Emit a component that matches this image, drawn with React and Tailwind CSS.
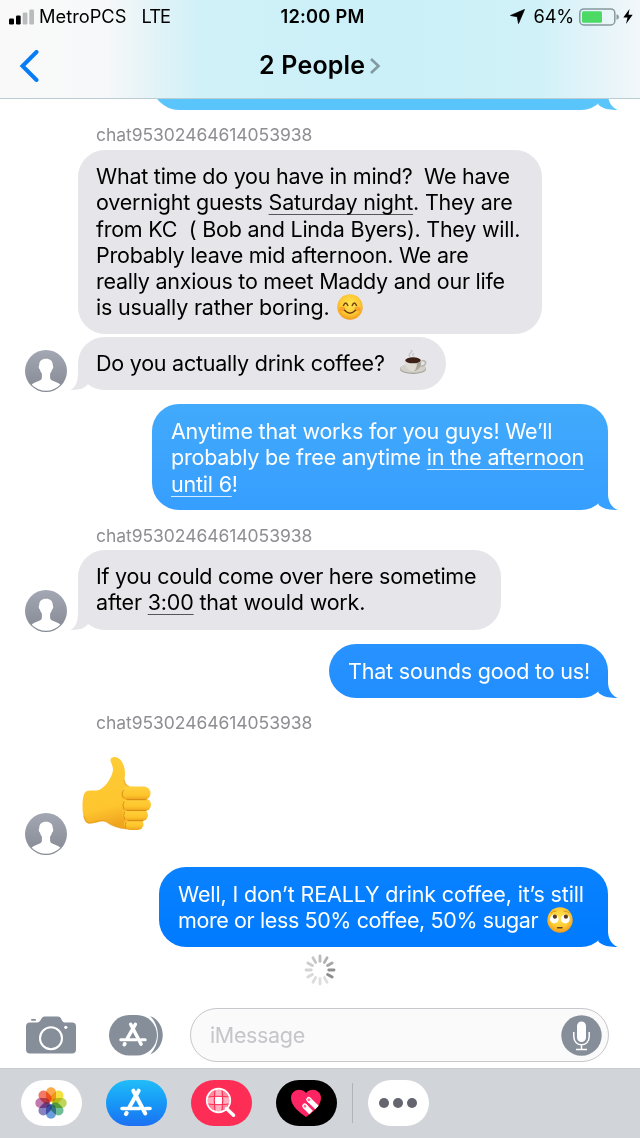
import React from "react";

const Avatar = () => (
  <svg className="block h-[42px] w-[42px]" viewBox="0 0 42 42">
    <defs>
      <linearGradient id="avatarFill" x1="0" y1="0" x2="0" y2="1">
        <stop offset="0" stopColor="#a2a7b3" />
        <stop offset="1" stopColor="#858993" />
      </linearGradient>
      <clipPath id="avatarClip"><circle cx="21" cy="21" r="19.8" /></clipPath>
    </defs>
    <circle cx="21" cy="21" r="21" fill="url(#avatarFill)" />
    <path clipPath="url(#avatarClip)" fill="#fff" d="M21 8.8c4.6 0 7 2.700 6.800 6.700.2.300.6.900.4 2-.2 1.300-.7 1.900-1.200 2.100-.3 1.900-1 3-1.900 4v4.400c.3 2.200 3 3 6.200 4.200 3.400 1.200 6 2.800 6 9.800H4.700c0-7 2.600-8.600 6-9.800 3.200-1.200 5.900-2 6.200-4.200v-4.400c-.9-1-1.600-2.100-1.900-4-.5-.2-1-.8-1.200-2.100-.2-1.100.2-1.700.4-2C14 11.500 16.400 8.800 21 8.800z" />
  </svg>
);

const TailRight = ({ className }) => (
  <svg className={"absolute -right-[10px] bottom-0 h-[30px] w-6 " + className} viewBox="0 0 24 30">
    <path fill="currentColor" d="M14 2V14C14 21 17 27 23.500 29.900C15.500 30.200 8.500 28.700 4.500 24.800L3 12Z" />
  </svg>
);

const TailLeft = () => (
  <svg className="absolute bottom-0 -left-[8px] h-[30px] w-6 text-[#e5e5ea]" viewBox="0 0 24 30">
    <path fill="currentColor" d="M8 2V14C8 21 6 27 .5 29.900C8 30.200 14 28.700 17.500 24.800L19 12Z" />
  </svg>
);

const Smile = () => (
  <svg className="ml-[8px] inline-block h-[26px] w-[26px] align-[-5px]" viewBox="0 0 26 26">
    <defs>
      <radialGradient id="smileFill" cx=".5" cy=".4" r=".6">
        <stop offset="0" stopColor="#ffe44f" /><stop offset=".65" stopColor="#fdc934" /><stop offset="1" stopColor="#f19a1c" />
      </radialGradient>
    </defs>
    <circle cx="13" cy="13" r="12.700" fill="url(#smileFill)" />
    <ellipse cx="5.500" cy="15" rx="3" ry="2.200" fill="#f58b2a" opacity=".6" />
    <ellipse cx="20.500" cy="15" rx="3" ry="2.200" fill="#f58b2a" opacity=".6" />
    <path d="M6.500 11.500Q8.700 6.500 10.800 11.500M15.200 11.500Q17.300 6.500 19.500 11.500M7.500 16.300Q13 22 18.500 16.300" fill="none" stroke="#6f4112" strokeWidth="1.500" strokeLinecap="round" />
  </svg>
);

const Coffee = () => (
  <svg className="ml-[15px] inline-block h-[26px] w-[27px] align-[-5px]" viewBox="0 0 27 26">
    <path d="M10 7Q8 5 10.500 3T11 0M14 7Q12 5 13.500 3" fill="none" stroke="#c3c3c7" strokeWidth="1.200" />
    <ellipse cx="13" cy="19" rx="13" ry="5" fill="#a5a096" />
    <ellipse cx="13" cy="18.300" rx="12.500" ry="4.500" fill="#d3d0c9" />
    <path d="M21 11c6-2 6.500 5-1 5.500" fill="none" stroke="#bbb7ae" strokeWidth="1.700" />
    <path d="M4.500 10h17c0 6-3 11-8.500 11S4.500 16 4.500 10z" fill="#dedbd3" />
    <path d="M17 12h4.300c-.5 5-3 8.500-7 9 2-2 2.700-5 2.700-9z" fill="#aaa59a" />
    <ellipse cx="13" cy="10" rx="8.500" ry="3.600" fill="#f3f1ec" />
    <ellipse cx="13" cy="10.300" rx="7.800" ry="3" fill="#3d2017" />
  </svg>
);

const RollingEyes = () => (
  <svg className="ml-[9px] inline-block h-[26px] w-[26px] align-[-5px]" viewBox="0 0 26 26">
    <circle cx="13" cy="13" r="12.700" fill="url(#smileFill)" />
    <circle cx="7.300" cy="12" r="4.400" fill="#fff" />
    <circle cx="18.300" cy="12" r="4.400" fill="#fff" />
    <circle cx="7.900" cy="9.700" r="2.100" fill="#5b3a22" />
    <circle cx="18.900" cy="9.700" r="2.100" fill="#5b3a22" />
    <path d="M10.500 20.700h4.500" stroke="#6f4112" strokeWidth="1.500" strokeLinecap="round" />
    <path d="M4 6Q6 3.500 9 4M17 4Q20 3.500 22 6" fill="none" stroke="#d68f20" strokeWidth="1" strokeLinecap="round" />
  </svg>
);

const ThumbsUp = () => (
  <svg className="block h-[76px] w-[72px]" viewBox="0 0 72 76">
    <defs>
      <linearGradient id="thumbFill" x1="0" y1="0" x2=".2" y2="1">
        <stop offset="0" stopColor="#fdce38" /><stop offset=".75" stopColor="#fec52e" /><stop offset="1" stopColor="#f0a51f" />
      </linearGradient>
      <linearGradient id="fingerFill" x1="0" y1="0" x2="0" y2="1">
        <stop offset="0" stopColor="#ffd03c" /><stop offset=".65" stopColor="#fec52c" /><stop offset="1" stopColor="#eda11c" />
      </linearGradient>
    </defs>
    <path fill="url(#thumbFill)" d="M6 35C10 34 15 35 18 34C25 31 31 21 32 14C32 9 29 6 29.500 3.500C31 -.5 38 .5 41 6C45 13 44 18 43.500 24C43.500 27 45 29.500 48 30.500L60 32L60 70L54 73.500L46 73C38 72.500 31 70 25 65.500C21 63.500 16 67 8 67.500C3 67 1.500 58 1.500 50C1.500 43 2.500 36 6 35Z" />
    <path fill="none" stroke="#e89b1c" strokeWidth="1.500" d="M3 60C4 64 6 67 8 67C14 67 20 63 25 65.500C31 70 38 72.500 46 72.700M43.300 24C43.500 27 45 29.500 48 30.500" opacity=".6" />
    <g fill="url(#fingerFill)">
      <rect x="43" y="62.500" width="19.500" height="11.500" rx="5.700" />
      <rect x="41.500" y="53.500" width="25.500" height="11.500" rx="5.700" />
      <rect x="41" y="42.500" width="29" height="12.500" rx="6.200" />
      <rect x="40" y="30.500" width="29.500" height="13.500" rx="6.700" />
    </g>
    <path d="M46 43.700H65M46 54.500H65M47 64.700H62M42.500 34Q39.500 38 42.500 42M43 45.500Q40.500 49 43 53M43.500 56Q41.500 59 43.500 63M45 66Q43 69 45 72" fill="none" stroke="#cf8310" strokeWidth="1" strokeLinecap="round" opacity=".8" />
  </svg>
);

const spokes = ["#bdbdbd", "#b1b1b1", "#a6a6a6", "#8f8f8f", "#8c8c8c", "#dedede", "#dedede", "#dcdcdc", "#d8d8d8", "#d4d4d4", "#cdcdcd", "#c6c6c6"];
const Spinner = () => (
  <svg className="block h-8 w-8" viewBox="-16 -16 32 32">
    {spokes.map((c, i) => (
      <path key={i} d="M0 -8.800V-14" stroke={c} strokeWidth="2.900" strokeLinecap="round" transform={`rotate(${i * 30})`} />
    ))}
  </svg>
);

const StoreGlyph = () => (
  <g fill="none" stroke="#fff" strokeLinecap="round">
    <path strokeWidth="4" d="M-2.700 -12.300L9.300 10.500M2.700 -12.300L-6.500 4" />
    <path strokeWidth="3.600" d="M-14 5.500H3.500M9.500 5.500H14" />
    <path strokeWidth="4.200" d="M-10 11L-9.400 10" />
  </g>
);

const Lab = ({ className }) => (
  <div className={"ml-24 text-[17.500px] leading-[22px] tracking-[-0.05px] text-[#8e8e93] " + className}>chat95302464614053938</div>
);

const U = ({ children, className = "decoration-[#55555a]" }) => (
  <span className={"underline decoration-1 underline-offset-[4px] " + className}>{children}</span>
);

const petals = ["#f9a13a", "#f3dd2e", "#b8d24a", "#62b58d", "#5b94d8", "#7e72b8", "#bb6ca5", "#ee6a57"];

export default function App() {
  return (
    <div className="flex h-[1138px] w-[640px] flex-col overflow-hidden bg-white font-['Inter','Liberation_Sans',sans-serif] text-black">
      <header className="flex h-[99px] shrink-0 flex-col border-b border-[#b9cdd2] bg-[linear-gradient(90deg,#f9f9f9_0px,#f7f8f9_105px,#e2f3f7_155px,#d0f1f8_200px,#cbf0f8_400px,#d0f1f8_540px,#e5f4f9_600px,#f2f7fa_640px)]">
        <div className="grid h-[33px] grid-cols-3 items-center pr-[7px] pl-[9px] text-[18.300px]">
          <div className="flex items-center">
            <svg className="mr-[5px] h-4 w-[25px]" viewBox="0 0 25 16">
              <rect x="0" y="9.500" width="5" height="6" rx="1.200" />
              <rect x="7" y="6.500" width="4.700" height="9" rx="1.200" />
              <rect x="13.700" y="3.500" width="4.700" height="12" rx="1.200" fill="#b9bcbd" />
              <rect x="20.300" y=".5" width="4.700" height="15" rx="1.200" fill="#b9bcbd" />
            </svg>
            <span className="whitespace-nowrap">MetroPCS</span>
            <span className="ml-[15px] tracking-[-0.9px]">LTE</span>
          </div>
          <div className="pl-[3px] text-center font-semibold tracking-[0.2px]">12:00 PM</div>
          <div className="flex items-center justify-end">
            <svg className="mr-[9px] h-[15px] w-[15px]" viewBox="0 0 15 15"><path d="M14.500 .5L8.500 14.500L7.300 7.700L.5 6.500Z" stroke="#000" strokeWidth=".8" strokeLinejoin="round" /></svg>
            <span className="tracking-[-0.2px]">64%</span>
            <svg className="ml-[5px] h-[18px] w-[40px]" viewBox="0 0 40 18">
              <rect x=".8" y=".9" width="35" height="16" rx="4" fill="none" stroke="#87999d" strokeWidth="1.500" />
              <rect x="3" y="3.200" width="20" height="11.500" rx="1.500" fill="#4cd964" />
              <path d="M37.500 6.300Q40 7 40 9T37.500 11.700Z" fill="#87999d" />
            </svg>
            <svg className="ml-[4px] h-[15px] w-[10px]" viewBox="0 0 10 15"><path d="M6.500 0L.3 8.500H4.500L3 15L9.700 5.800H5.500Z" /></svg>
          </div>
        </div>
        <div className="flex h-[65px] items-center">
          <svg className="ml-[19px] h-8 w-5" viewBox="0 0 20 32"><path d="M17.500 2L3.500 16L17.500 30" fill="none" stroke="#087cf5" strokeWidth="4" strokeLinecap="round" /></svg>
          <h1 className="ml-[220px] pt-px text-[25px] font-semibold tracking-[0.2px] whitespace-nowrap">2 People</h1>
          <svg className="ml-[4px] h-[18px] w-3" viewBox="0 0 12 18"><path d="M2 2L9.500 9L2 16" fill="none" stroke="#8299a1" strokeWidth="2.600" /></svg>
        </div>
      </header>

      <main className="flex h-[901px] shrink-0 flex-col text-[21.500px] leading-[26.300px] tracking-[-0.240px] whitespace-pre">
        <div className="h-[11px] overflow-hidden pl-[152px]">
          <div className="relative -mt-[43px] h-[54px] w-[456px] rounded-[27px] bg-[#5ac5fa]">
            <TailRight className="text-[#5ac5fa]" />
          </div>
        </div>
        <Lab className="mt-[14px]" />
        <div className="mt-[4px] ml-[78px] h-[184px] w-[464px] rounded-[27px] bg-[#e5e5ea] pt-[13px] pl-[18px]">
          <div>What time do you have in mind?  We have</div>
          <div className="tracking-[-0.200px]">overnight guests <U>Saturday night</U>. They are</div>
          <div>from KC  ( Bob and Linda Byers). They will.</div>
          <div>Probably leave mid afternoon. We are</div>
          <div>really anxious to meet Maddy and our life</div>
          <div className="h-[26.300px] tracking-[-0.200px]">is usually rather boring.<Smile /></div>
        </div>
        <div className="mt-[3px] flex h-[54px] items-end pl-[24.500px]">
          <div className="-mb-px"><Avatar /></div>
          <div className="relative ml-[11.500px] h-[53px] w-[368px] self-start rounded-[27px] bg-[#e5e5ea] pt-[13px] pl-[18px]">
            <TailLeft />
            <div className="relative h-[26.300px]">Do you actually drink coffee?<Coffee /></div>
          </div>
        </div>
        <div className="relative mt-[13px] ml-[152px] h-[106px] w-[456px] rounded-[27px] bg-linear-to-b from-[#42aafb] to-[#369eff] pt-[14px] pl-[19px] tracking-[-0.210px] text-white">
          <TailRight className="text-[#38a0fe]" />
          <div className="relative">Anytime that works for you guys! We’ll</div>
          <div className="relative">probably be free anytime <U className="decoration-[#d5ecff]">in the afternoon</U></div>
          <div className="relative"><U className="decoration-[#d5ecff]">until 6</U>!</div>
        </div>
        <Lab className="mt-[15px]" />
        <div className="mt-[3px] flex h-[82px] items-end pl-[24.500px]">
          <Avatar />
          <div className="relative ml-[11.500px] h-[80px] w-[423px] self-start rounded-[27px] bg-[#e5e5ea] pt-[13px] pl-[18px]">
            <TailLeft />
            <div className="relative tracking-[-0.260px]">If you could come over here sometime</div>
            <div className="relative tracking-[-0.180px]">after <U>3:00</U> that would work.</div>
          </div>
        </div>
        <div className="relative mt-[12px] ml-[329px] h-[54px] w-[279px] rounded-[27px] bg-linear-to-b from-[#2893ff] to-[#218eff] pt-[13.500px] pl-[19px] tracking-[-0.180px] text-white">
          <TailRight className="text-[#238fff]" />
          <div className="relative">That sounds good to us!</div>
        </div>
        <Lab className="mt-[14px]" />
        <div className="mt-[22px] flex h-[99px] items-start pl-[24.500px]">
          <div className="mt-[57px]"><Avatar /></div>
          <div className="ml-[14.500px]"><ThumbsUp /></div>
        </div>
        <div className="relative mt-[12px] ml-[159px] h-[80px] w-[449px] rounded-[27px] bg-linear-to-b from-[#0a82ff] to-[#007aff] pt-[14px] pl-[19px] text-white">
          <TailRight className="text-[#017bff]" />
          <div className="relative tracking-[-0.140px]">Well, I don’t REALLY drink coffee, it’s still</div>
          <div className="relative h-[26.300px] tracking-[-0.390px]">more or less 50% coffee, 50% sugar<RollingEyes /></div>
        </div>
        <div className="mt-[7px] flex justify-center"><Spinner /></div>
      </main>

      <section className="flex h-[68px] shrink-0 items-center pt-0.5 pl-[26px]">
        <svg className="h-[38px] w-[50px]" viewBox="0 0 50 38">
          <path fill="#858e99" d="M4 6.500H11.500C13.500 6.500 14.500 4 16 1.800Q17 .5 19 .5H31.500Q33.500 .5 34.500 1.800C36 4 36.500 6.500 38.500 6.500H46Q50 6.500 50 10.500V33.500Q50 37.500 46 37.500H4Q0 37.500 0 33.500V10.500Q0 6.500 4 6.500Z" />
          <rect x="5" y="3" width="5" height="1.700" rx=".8" fill="#858e99" />
          <circle cx="25" cy="22.300" r="11" fill="none" stroke="#fff" strokeWidth="2" />
          <circle cx="39.800" cy="11.300" r="1.600" fill="#fff" />
        </svg>
        <svg className="ml-[33px] h-[41px] w-[54px]" viewBox="0 0 54 41">
          <path fill="#858e99" d="M41 1C57.500 7 58.500 32 41 39.500C51.500 29 51.500 11 41 1Z" />
          <rect x="0" y="0" width="48" height="40.500" rx="20.200" fill="#858e99" />
          <g transform="translate(24 20) scale(.87)"><StoreGlyph /></g>
        </svg>
        <div className="ml-[27px] flex h-[54px] w-[419px] items-center justify-between rounded-full border-[1.500px] border-[#c7c7cc] bg-[#fafafa] pr-[6px] pl-[19px]">
          <span className="text-[21.500px] tracking-[-0.350px] text-[#c5c5ca]">iMessage</span>
          <svg className="h-[41px] w-[41px]" viewBox="0 0 41 41">
            <circle cx="20.500" cy="20.500" r="20.200" fill="#858e99" />
            <rect x="16" y="6.500" width="9" height="20.500" rx="4.500" fill="#fff" />
            <path d="M12.800 17V21.500C12.800 32.500 28.200 32.500 28.200 21.500V17M20.500 29.500V34.500M15 34.500H26" fill="none" stroke="#fff" strokeWidth="1.500" />
          </svg>
        </div>
      </section>

      <footer className="flex h-[70px] shrink-0 items-center border-t border-[#c9ccd1] bg-[#d1d4d9] pb-px pl-[20.500px]">
        <div className="flex h-[46px] w-[61px] items-center justify-center rounded-[23px] bg-white">
          <svg className="h-8 w-8" viewBox="-16 -16 32 32">
            {petals.map((c, i) => (
              <rect key={i} x="-5" y="-15.700" width="10" height="14.500" rx="5" fill={c} fillOpacity=".9" className="mix-blend-multiply" transform={`rotate(${i * 45})`} />
            ))}
          </svg>
        </div>
        <div className="ml-[24px] flex h-[46px] w-[61px] items-center justify-center rounded-[23px] bg-linear-to-b from-[#22bdf9] to-[#1c70f2]">
          <svg className="h-8 w-9" viewBox="-18 -16 36 32"><StoreGlyph /></svg>
        </div>
        <div className="ml-[24px] flex h-[46px] w-[61px] items-center justify-center rounded-[23px] bg-[#fe2d55]">
          <svg className="h-8 w-8" viewBox="0 0 32 32">
            <circle cx="13.500" cy="13.500" r="10.500" fill="#ff8ca1" />
            <path d="M10 3H17V10H24V17H17V24H10V17H3V10H10Z" fill="#ffb1bf" />
            <path d="M10 10h7v7h-7z" fill="#fff" />
            <path d="M10 3Q8.500 13 10 24M17 3Q18.500 13 17 24M3 10Q13 8.500 24 10M3 17Q13 18.500 24 17" fill="none" stroke="#fe2d55" strokeWidth="1.200" />
            <circle cx="13.500" cy="13.500" r="11.700" fill="none" stroke="#fff" strokeWidth="1.900" />
            <path d="M21.500 21.500L28.500 28.200" stroke="#fff" strokeWidth="3.500" strokeLinecap="round" />
          </svg>
        </div>
        <div className="ml-[24px] flex h-[46px] w-[61px] items-center justify-center rounded-[23px] bg-black">
          <svg className="h-7 w-8" viewBox="0 0 32 28">
            <path d="M16 28C10 24 1 17 1 9C1 1 11-2 16 4C21-2 31 1 31 9C31 17 22 24 16 28Z" fill="#fc2463" />
            <g fill="none" strokeLinecap="round">
              <path d="M14.700 17L21 23.500M18.700 10.500L27 18.500" stroke="#fff" strokeWidth="5" strokeLinecap="butt" />
              <path d="M14.700 17L15.500 17.800M18.700 10.500L19.500 11.300" stroke="#fff" strokeWidth="5" />
              <path d="M14.900 17.200L15 17.300M18.900 10.700L19 10.800" stroke="#fc6d94" strokeWidth="2.800" />
            </g>
          </svg>
        </div>
        <div className="ml-[15px] h-10 w-px bg-[#b0b4ba]" />
        <div className="ml-[15px] flex h-[46px] w-[61px] items-center justify-center gap-[4px] rounded-[23px] bg-white">
          <span className="h-[10px] w-[10px] rounded-full bg-[#65656f]" />
          <span className="h-[10px] w-[10px] rounded-full bg-[#65656f]" />
          <span className="h-[10px] w-[10px] rounded-full bg-[#65656f]" />
        </div>
      </footer>
    </div>
  );
}
